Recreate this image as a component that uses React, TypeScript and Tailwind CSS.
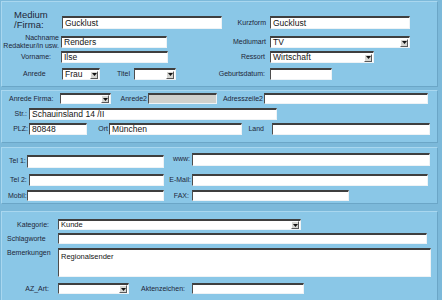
import clsx from 'clsx';
import type { ReactNode } from 'react';

// klassische "sunken" Eingabefelder
const sunken =
  'border-t-2 border-l border-b border-r border-t-[#3f3f3f] border-l-[#4d4d4d] border-b-[#eef3f6] border-r-[#eef3f6]';

function Label({ className, children }: { className?: string; children?: ReactNode }) {
  return (
    <div className={clsx('shrink-0 whitespace-nowrap text-[7px] leading-[8px] text-[#1e2638]', className)}>
      {children}
    </div>
  );
}

function Field({ className, value, disabled }: { className?: string; value?: string; disabled?: boolean }) {
  return (
    <div
      className={clsx(
        'flex shrink-0 items-center overflow-hidden whitespace-nowrap pl-[2px] text-[#151515]',
        sunken,
        disabled ? 'bg-[#cfd0cc]' : 'bg-white',
        className,
      )}
    >
      {value}
    </div>
  );
}

function Select({ className, value }: { className?: string; value?: string }) {
  return (
    <div
      className={clsx(
        'flex shrink-0 items-center justify-between overflow-hidden whitespace-nowrap bg-white pr-[1px] pl-[2px] text-[#151515]',
        sunken,
        className,
      )}
    >
      <span>{value}</span>
      <div className="flex h-[8px] w-[8px] items-center justify-center border border-t-[#ffffff] border-l-[#ffffff] border-b-[#5a5a5a] border-r-[#5a5a5a] bg-[#d6d6d2]">
        <svg width="5" height="3" viewBox="0 0 5 3">
          <path d="M0 0H5L2.5 3Z" fill="#111" />
        </svg>
      </div>
    </div>
  );
}

function Panel({ className, children }: { className?: string; children: ReactNode }) {
  return (
    <div
      className={clsx(
        'flex w-[437px] shrink-0 flex-col border border-t-[#a9d7ef] border-l-[#a9d7ef] border-b-[#6ba6c7] border-r-[#6ba6c7] bg-[#8ac7e7]',
        className,
      )}
    >
      {children}
    </div>
  );
}

export default function App() {
  return (
    <div className="flex h-[300px] w-[442px] flex-col overflow-hidden bg-[#7cb9da] pt-[1px] pl-[1px] font-['Liberation_Sans',Arial,sans-serif]">
      {/* Stammdaten */}
      <Panel className="h-[86px] text-[8.5px]">
        <div className="mt-[14px] flex h-[13px] items-center">
          <Label className="ml-[12px] w-[48px] -translate-y-[3px] text-[9.5px] leading-[10px] text-[#1a2436]">
            Medium
            <br />
            /Firma:
          </Label>
          <Field className="h-[13px] w-[160px]" value="Gucklust" />
          <Label className="w-[48px] pr-[4px] text-right">Kurzform</Label>
          <Field className="h-[13px] w-[140px]" value="Gucklust" />
        </div>

        <div className="mt-[7px] flex h-[12px] items-center">
          <Label className="w-[59px] pr-[2px] text-right text-[6.5px] leading-[7px]">
            Nachname
            <br />
            Redakteur/in usw.
          </Label>
          <Field className="h-[12px] w-[106px]" value="Renders" />
          <Label className="w-[103px] pr-[4px] text-right">Mediumart</Label>
          <Select className="h-[12px] w-[140px]" value="TV" />
        </div>

        <div className="mt-[3px] flex h-[12px] items-center">
          <Label className="w-[59px] pr-[10px] text-right">Vorname:</Label>
          <Field className="h-[12px] w-[107px]" value="Ilse" />
          <Label className="w-[102px] pr-[5px] text-right">Ressort</Label>
          <Select className="h-[12px] w-[104px]" value="Wirtschaft" />
        </div>

        <div className="mt-[5px] flex h-[12px] items-center">
          <Label className="w-[60px] pl-[21px]">Anrede</Label>
          <Select className="h-[12px] w-[38px]" value="Frau" />
          <Label className="w-[34px] pr-[4px] text-right">Titel</Label>
          <Select className="h-[12px] w-[42px]" />
          <Label className="w-[94px] pr-[5px] text-right">Geburtsdatum:</Label>
          <Field className="h-[12px] w-[62px]" />
        </div>
      </Panel>

      {/* Adresse */}
      <Panel className="mt-[3px] h-[53px] text-[8.5px]">
        <div className="mt-[2px] flex h-[11px] items-center">
          <Label className="w-[58px] pl-[7px]">Anrede Firma:</Label>
          <Select className="h-[11px] w-[51px]" />
          <Label className="w-[37px] pr-[1px] text-right">Anrede2</Label>
          <Field className="h-[11px] w-[69px]" disabled />
          <Label className="w-[47px] pr-[1px] text-right">Adresszeile2</Label>
          <Field className="h-[11px] w-[164px]" />
        </div>

        <div className="mt-[4px] flex h-[12px] items-center">
          <Label className="w-[27px] pr-[2px] text-right">Str.:</Label>
          <Field className="h-[12px] w-[248px]" value="Schauinsland 14 /II" />
        </div>

        <div className="mt-[3px] flex h-[12px] items-center">
          <Label className="w-[27px] pr-[1px] text-right">PLZ:</Label>
          <Field className="h-[12px] w-[58px]" value="80848" />
          <Label className="w-[22px] pr-[1px] text-right">Ort</Label>
          <Field className="h-[12px] w-[133px]" value="München" />
          <Label className="w-[30px] pr-[8px] text-right">Land</Label>
          <Field className="h-[12px] w-[158px]" />
        </div>
      </Panel>

      {/* Kontakt */}
      <Panel className="mt-[4px] h-[57px]">
        <div className="mt-[6px] flex h-[13px] items-center">
          <Label className="w-[25px] pl-[7px]">Tel 1:</Label>
          <Field className="h-[13px] w-[137px] translate-y-[1px]" />
          <Label className="w-[28px] -translate-y-[2px] pr-[2px] text-right">www:</Label>
          <Field className="h-[13px] w-[238px] -translate-y-[1px]" />
        </div>

        <div className="mt-[7px] flex h-[12px] items-center">
          <Label className="w-[27px] pl-[8px]">Tel 2:</Label>
          <Field className="h-[12px] w-[135px]" />
          <Label className="w-[28px] pr-[1px] text-right">E-Mail:</Label>
          <Field className="h-[12px] w-[236px]" />
        </div>

        <div className="mt-[4px] flex h-[11px] items-center">
          <Label className="w-[25px] pl-[6px]">Mobil:</Label>
          <Field className="h-[11px] w-[137px]" />
          <Label className="w-[28px] pr-[3px] text-right">FAX:</Label>
          <Field className="h-[11px] w-[157px]" />
        </div>
      </Panel>

      {/* Sonstiges */}
      <Panel className="mt-[7px] h-[100px] text-[7.5px]">
        <div className="mt-[7px] flex h-[11px] items-center">
          <Label className="w-[56px] pr-[9px] text-right">Kategorie:</Label>
          <Select className="h-[11px] w-[243px]" value="Kunde" />
        </div>

        <div className="mt-[3px] flex h-[11px] items-center">
          <Label className="w-[56px] pl-[5px]">Schlagworte</Label>
          <Field className="h-[11px] w-[369px]" />
        </div>

        <div className="mt-[4px] flex h-[29px] items-start">
          <Label className="mt-[1px] w-[56px] pl-[5px]">Bemerkungen</Label>
          <div className={clsx('h-[29px] w-[373px] shrink-0 bg-white pt-[1px] pl-[2px] text-[#151515]', sunken)}>
            Regionalsender
          </div>
        </div>

        <div className="mt-[6px] flex h-[11px] items-center">
          <Label className="w-[56px] pr-[9px] text-right">AZ_Art:</Label>
          <Select className="h-[11px] w-[71px]" />
          <Label className="w-[63px] pr-[7px] text-right">Aktenzeichen:</Label>
          <Field className="h-[11px] w-[112px]" />
        </div>
      </Panel>
    </div>
  );
}
